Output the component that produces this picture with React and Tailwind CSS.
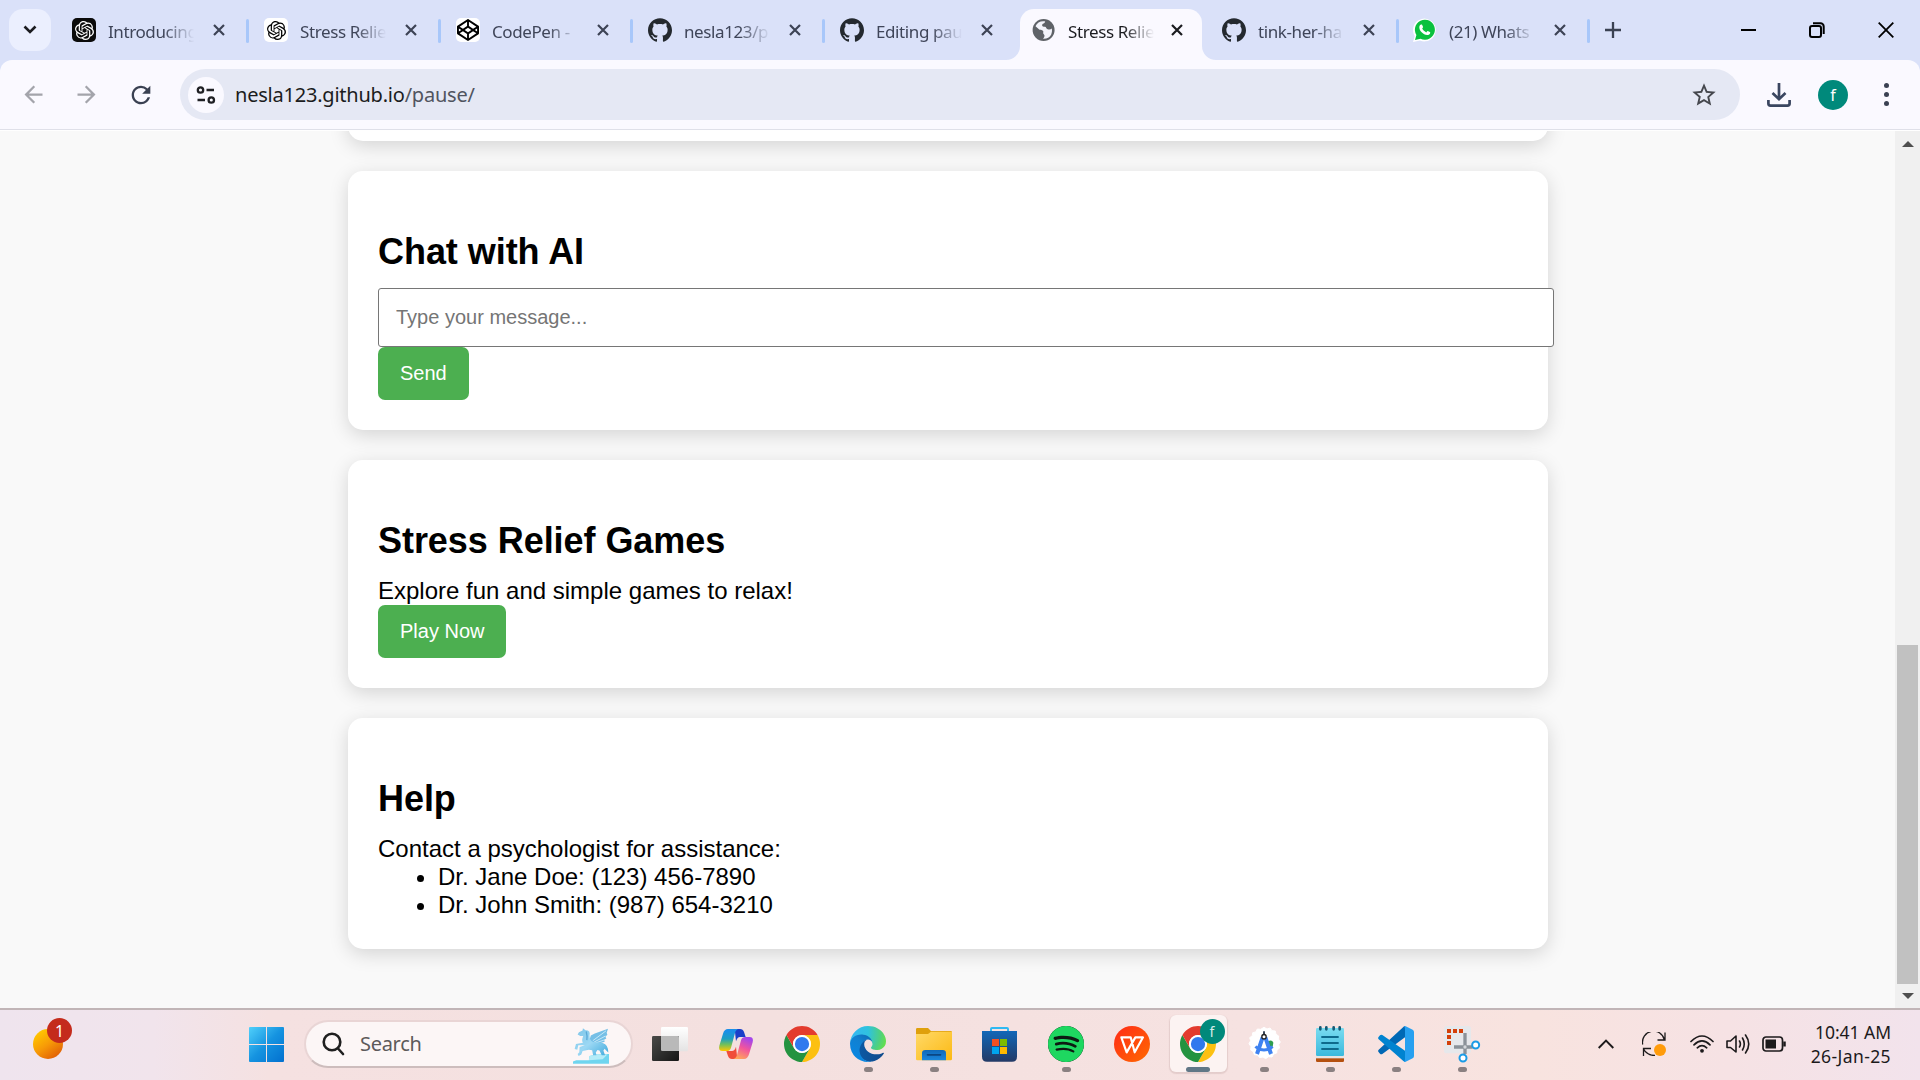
import React from "react";
import { SiOpenai, SiGithub, SiSpotify } from "react-icons/si";
import { FaCodepen } from "react-icons/fa";
import { MdArrowBack, MdArrowForward, MdRefresh, MdStarBorder } from "react-icons/md";

const Cross = ({ className = "" }) => (
  <svg viewBox="0 0 12 12" className={`h-3 w-3 shrink-0 ${className}`} stroke="currentColor" strokeWidth="2.2" fill="none">
    <path d="M1 1L11 11M11 1L1 11" />
  </svg>
);

const Globe = () => (
  <svg viewBox="0 0 24 24" className="h-6 w-6">
    <circle cx="11.6" cy="12" r="11" fill="#5f6368" />
    <path d="M13.2 3.4c-4-1-8.200 1-9.700 4.900l3.700 3.100c1.300.9 3.400.2 4 1.600.4 1.300-.6 2.200.6 3.200 1.500 1.100.4 3.300-.8 4.500 3.500.3 6.600-1 8.100-3.900.900-2 1.200-4.700.6-6.200-.9 1-2.400 1.200-4 .7-1.900-.7-1.200-2.500-3.200-2.500-2.300 0-3.100-1.600-1.600-3 .9-.8 2.200-1 2.300-2.400z" fill="#f3f4fb" />
  </svg>
);

const Tile = ({ dark, children }) => (
  <span className={`flex h-6 w-6 items-center justify-center rounded-[5px] ${dark ? "bg-[#0b0b0b] text-white" : "bg-white text-black"}`}>
    {children}
  </span>
);

const github = <SiGithub className="h-6 w-6 text-[#24292f]" />;

const TABS = [
  { title: "Introducing", icon: <Tile dark><SiOpenai size={19} /></Tile>, width: "w-[192px]", sep: true },
  { title: "Stress Relie", icon: <Tile><SiOpenai size={19} /></Tile>, width: "w-[192px]", sep: true },
  { title: "CodePen -", icon: <Tile><FaCodepen size={22} /></Tile>, width: "w-[192px]", sep: true },
  { title: "nesla123/p", icon: github, width: "w-[192px]", sep: true },
  { title: "Editing pau", icon: github, width: "w-[192px]" },
  { title: "Stress Relie", icon: <Globe />, width: "w-[190px]", active: true },
  { title: "tink-her-ha", icon: github, width: "w-[191px]", sep: true },
  {
    title: "(21) Whats",
    icon: (
      <svg viewBox="0 0 24 24" className="h-6 w-6">
        <path d="M0 24l1.700-6A11.400 11.400 0 1 1 7 22.500z" fill="#fff" />
        <path d="M2 22l1.400-5A10 10 0 1 1 7.500 20.700z" fill="#0ac13e" />
        <path d="M8.300 6.500c.5 0 .7 0 .9.5l.9 2.100c.1.400-.7 1.200-.9 1.500.9 1.800 2.300 3 4.100 3.800.4-.3 1-1.500 1.400-1.400l2.200 1c.4.200.4.500.3 1-.3 1.400-1.600 2-2.900 2-4.300-.5-8-4.200-8-7.800 0-1.400.9-2.700 2-2.700z" fill="#fff" />
      </svg>
    ),
    width: "w-[191px]",
    sep: true,
  },
];

const Tab = ({ title, icon, width, sep, active }) => (
  <div className={`relative flex h-[51px] shrink-0 ${width}`}>
    <div className={`flex h-full w-[182px] items-center pb-[9px] pl-3 ${active ? "rounded-t-[14px] bg-[#faf9ff]" : ""}`}>
      {icon}
      <span
        className={`ml-3 mt-[3px] w-[90px] shrink-0 whitespace-nowrap text-[17px] leading-6 tracking-[-0.4px] [mask-image:linear-gradient(to_right,black_62%,transparent_96%)] ${active ? "text-[#1b1c20]" : "text-[#3f4559]"}`}
      >
        {title}
      </span>
      <Cross className={active ? "ml-[13px] text-[#1b1c20]" : "ml-[15px] text-[#3d4355]"} />
    </div>
    {sep && <div className="ml-1 mt-[10px] h-6 w-[3px] rounded-full bg-[#a8c7fa]" />}
    {active && (
      <>
        <svg viewBox="0 0 14 14" className="absolute -left-[14px] bottom-0 h-[14px] w-[14px]">
          <path d="M14 0V14H0A14 14 0 0 0 14 0z" fill="#faf9ff" />
        </svg>
        <svg viewBox="0 0 14 14" className="absolute bottom-0 left-[182px] h-[14px] w-[14px]">
          <path d="M0 0V14H14A14 14 0 0 1 0 0z" fill="#faf9ff" />
        </svg>
      </>
    )}
  </div>
);

const TabStrip = () => (
  <div className="flex h-[60px] shrink-0 items-start bg-[#dae1f9] pt-[9px]">
    <div className="ml-[9px] mr-[9px] flex h-[42px] w-[42px] shrink-0 items-center justify-center rounded-[14px] bg-[#ebeffe]">
      <svg viewBox="0 0 14 10" className="h-[10px] w-[14px]" fill="none" stroke="#1b1c20" strokeWidth="2.6">
        <path d="M1.500 1.500L7 7L12.500 1.500" />
      </svg>
    </div>
    {TABS.map((t, i) => (
      <Tab key={i} {...t} />
    ))}
    <svg viewBox="0 0 16 16" className="ml-[13px] mt-[13px] h-4 w-4 shrink-0" stroke="#3a4152" strokeWidth="2.300">
      <path d="M8 0V16M0 8H16" />
    </svg>
    <div className="ml-auto mr-[26px] mt-[12px] flex h-[18px] items-center gap-[53px] text-black">
      <div className="h-[2px] w-[15px] bg-black" />
      <svg viewBox="0 0 16 16" className="h-4 w-4" fill="none" stroke="#000" strokeWidth="2">
        <rect x="1" y="4" width="11" height="11" rx="2" />
        <path d="M4 1.300H11.500A3.200 3.200 0 0 1 14.700 4.500V12" />
      </svg>
      <svg viewBox="0 0 16 16" className="h-4 w-4" fill="none" stroke="#000" strokeWidth="1.800">
        <path d="M.7.700L15.300 15.300M15.300.700L.7 15.300" />
      </svg>
    </div>
  </div>
);

const Toolbar = () => (
  <div className="h-[71px] shrink-0 bg-[#dae1f9]">
    <div className="flex h-[70px] items-center rounded-t-[12px] border-b border-[#dfe0e9] bg-[#faf9ff] pl-[20px]">
      <MdArrowBack size={27} className="mr-[26px] text-[#a3a4ab]" />
      <MdArrowForward size={27} className="mr-[27px] text-[#a3a4ab]" />
      <MdRefresh size={28} className="mr-[25px] text-[#3a4152]" />
      <div className="flex h-[51px] w-[1560px] items-center rounded-full bg-[#e5e8f4] pl-[8px] pr-[22px]">
        <div className="flex h-9 w-9 items-center justify-center rounded-full bg-[#faf9ff]">
          <svg viewBox="0 0 20 18" className="h-[18px] w-5" fill="none" stroke="#1f2024" strokeWidth="2.300">
            <circle cx="4.500" cy="4" r="2.700" />
            <path d="M10.500 4H18M1.500 14H9" />
            <circle cx="15.300" cy="14" r="2.700" />
          </svg>
        </div>
        <span className="ml-[11px] text-[20px] leading-7 tracking-[-0.22px] text-[#1b1c20]">
          nesla123.github.io<span className="text-[#50545f]">/pause/</span>
        </span>
        <MdStarBorder size={28} className="ml-auto text-[#45474d]" />
      </div>
      <svg viewBox="0 0 24 24" className="ml-[27px] h-6 w-6" fill="none" stroke="#3a4660" strokeWidth="2.700">
        <path d="M12 0V15.500M5.500 10L12 16.200L18.500 10M1.400 17V20.500Q1.400 22.600 3.500 22.600H20.500Q22.600 22.600 22.600 20.500V17" />
      </svg>
      <div className="ml-[27px] flex h-[30px] w-[30px] items-center justify-center rounded-full bg-[#00897b] text-[16px] text-white">f</div>
      <div className="ml-[36px] flex flex-col gap-[4px]">
        <i className="h-[5px] w-[5px] rounded-full bg-[#3a4152]" />
        <i className="h-[5px] w-[5px] rounded-full bg-[#3a4152]" />
        <i className="h-[5px] w-[5px] rounded-full bg-[#3a4152]" />
      </div>
    </div>
    <div className="h-px bg-white" />
  </div>
);

const Card = ({ title, height, children }) => (
  <section className={`w-[1200px] shrink-0 rounded-[15px] bg-white px-[30px] pt-[60px] shadow-[0_5px_19px_rgba(0,0,0,0.15)] ${height}`}>
    <h2 className="mb-[15px] text-[36px] font-bold leading-[42px] tracking-[-0.05px]">{title}</h2>
    {children}
  </section>
);

const GreenButton = ({ children }) => (
  <button className="block h-[53px] rounded-[7px] bg-[#4caf50] px-[22px] text-[20px] leading-[23px] text-white">{children}</button>
);

const Page = () => (
  <div className="flex min-h-0 flex-1 bg-[#f9f9f9] font-['Liberation_Sans',Arial,sans-serif] text-[24px] leading-[28px] text-black">
    <main className="flex flex-1 flex-col gap-[30px] overflow-hidden pl-[348px]">
      <div className="h-[10px] w-[1200px] shrink-0">
        <div className="-mt-[40px] h-[50px] rounded-[15px] bg-white shadow-[0_5px_19px_rgba(0,0,0,0.15)]" />
      </div>
      <Card title="Chat with AI" height="h-[259px]">
        <input
          placeholder="Type your message..."
          className="block h-[59px] w-[1176px] rounded-[3px] border border-[#767676] bg-white px-[17px] text-[20px] placeholder:text-[#757575]"
        />
        <GreenButton>Send</GreenButton>
      </Card>
      <Card title="Stress Relief Games" height="h-[228px]">
        <p>Explore fun and simple games to relax!</p>
        <GreenButton>Play Now</GreenButton>
      </Card>
      <Card title="Help" height="h-[231px]">
        <p>Contact a psychologist for assistance:</p>
        <ul className="list-disc pl-[60px]">
          <li>Dr. Jane Doe: (123) 456-7890</li>
          <li>Dr. John Smith: (987) 654-3210</li>
        </ul>
      </Card>
    </main>
    <div className="flex w-[25px] flex-col items-center bg-[#f0f0f0] py-[10px] pb-[9px]">
      <svg viewBox="0 0 12 6" className="h-[6px] w-[12px] shrink-0" fill="#4f4f4f"><path d="M0 6L6 0L12 6z" /></svg>
      <div className="mt-auto mb-[9px] h-[339px] w-[21px] bg-[#c1c1c1]" />
      <svg viewBox="0 0 12 6" className="h-[6px] w-[12px] shrink-0" fill="#4f4f4f"><path d="M0 0L6 6L12 0z" /></svg>
    </div>
  </div>
);

const Icon = ({ children, box = "0 0 108 108" }) => (
  <svg viewBox={box} className="h-9 w-9 overflow-visible">{children}</svg>
);

const TaskView = () => (
  <Icon>
    <defs>
      <linearGradient id="tvDark" x1="0" y1="0" x2="1" y2="1"><stop stopColor="#4a4a48" /><stop offset="1" stopColor="#151515" /></linearGradient>
      <linearGradient id="tvLight" x1="0" y1="0" x2="0" y2="1"><stop stopColor="#fff" /><stop offset="1" stopColor="#e4e3e3" /></linearGradient>
    </defs>
    <rect x="27" y="3" width="81" height="73" rx="4" fill="url(#tvLight)" />
    <rect x="0" y="30" width="81" height="75" rx="4" fill="url(#tvDark)" />
    <path d="M27 30H77Q81 30 81 34V75H31Q27 75 27 71z" fill="#b9b9b9" />
  </Icon>
);

const Copilot = () => (
  <Icon>
    <defs>
      <linearGradient id="cpA" x1="0" y1="0" x2="0" y2="1"><stop offset=".1" stopColor="#1a8fe8" /><stop offset=".45" stopColor="#1e9fc0" /><stop offset=".7" stopColor="#6fbf5c" /><stop offset="1" stopColor="#ffc800" /></linearGradient>
      <linearGradient id="cpB" x1=".7" y1="0" x2=".3" y2="1"><stop offset=".05" stopColor="#a546ea" /><stop offset=".5" stopColor="#f2559c" /><stop offset="1" stopColor="#ffa65a" /></linearGradient>
    </defs>
    <path d="M50 9H66Q75 9 78 18L83 33H66Q58 33 54 46z" fill="#1a3fc9" />
    <path d="M58 99H42Q33 99 30 90L25 75H42Q50 75 54 62z" fill="#f04e3a" />
    <path d="M30 9H62Q54 10 51 21L39 65Q36 75 26 75H14Q0 75 4 59L15 23Q19 9 30 9z" fill="url(#cpA)" />
    <path d="M78 99H46Q54 98 57 87L69 43Q72 33 82 33H94Q108 33 104 49L93 85Q89 99 78 99z" fill="url(#cpB)" />
  </Icon>
);

const Chrome = () => (
  <Icon box="0 0 48 48">
    <path d="M24 12H44.780A24 24 0 0 1 24 48L34.390 30A12 12 0 0 0 24 12" fill="#fcc011" />
    <path d="M13.610 30L3.220 12A24 24 0 0 0 24 48L34.390 30A12 12 0 0 1 13.610 30" fill="#249340" />
    <path d="M3.220 12A24 24 0 0 1 44.780 12H24A12 12 0 0 0 13.610 30z" fill="#e33b2e" />
    <circle cx="24" cy="24" r="12" fill="#fff" />
    <circle cx="24" cy="24" r="9.500" fill="#3079ee" />
  </Icon>
);

const Edge = () => (
  <Icon box="0 0 256 256">
    <defs>
      <linearGradient id="edA" x1="63" y1="177" x2="241" y2="177" gradientUnits="userSpaceOnUse"><stop stopColor="#0c59a4" /><stop offset="1" stopColor="#114a8b" /></linearGradient>
      <linearGradient id="edB" x1="157" y1="80" x2="46" y2="220" gradientUnits="userSpaceOnUse"><stop stopColor="#0f6cb5" /><stop offset=".4" stopColor="#1180d0" /><stop offset="1" stopColor="#0a86e0" /></linearGradient>
      <radialGradient id="edC" cx="20" cy="50" r="245" gradientUnits="userSpaceOnUse"><stop stopColor="#35b8f1" /><stop offset=".45" stopColor="#2fc2df" /><stop offset=".8" stopColor="#4ed07f" /><stop offset="1" stopColor="#66e048" /></radialGradient>
    </defs>
    <path fill="url(#edA)" d="M235.680 190.540a93.730 93.730 0 0 1-10.540 4.710 101.870 101.870 0 0 1-35.900 6.460c-47.320 0-88.540-32.550-88.540-74.320A31.480 31.480 0 0 1 117.130 100c-42.800 1.800-53.800 46.400-53.800 72.530 0 73.880 68.090 81.370 82.760 81.370 7.910 0 19.840-2.300 27-4.560l1.310-.44a128.340 128.340 0 0 0 66.600-52.800 4 4 0 0 0-5.320-5.560z" />
    <path fill="url(#edB)" d="M105.730 241.420a79.200 79.200 0 0 1-22.740-21.340 80.720 80.720 0 0 1 29.530-120c3.120-1.470 8.450-4.130 15.540-4a32.350 32.350 0 0 1 25.690 13 31.880 31.880 0 0 1 6.360 18.660c0-.21 24.460-79.600-80-79.600-43.900 0-80 41.660-80 78.210a130.150 130.150 0 0 0 12.110 56 128 128 0 0 0 156.380 67.110 75.550 75.550 0 0 1-62.780-8z" />
    <path fill="url(#edC)" d="M152.330 148.860c-.81 1.050-3.300 2.500-3.300 5.660 0 2.610 1.700 5.120 4.720 7.230 14.380 10 41.490 8.680 41.560 8.680a59.560 59.560 0 0 0 30.270-8.350A61.380 61.380 0 0 0 256 109.200c.26-22.410-8-37.310-11.340-43.910C223.460 23.840 177.720 0 128 0A128 128 0 0 0 0 126.200c.48-36.540 36.800-66.050 80-66.050 3.500 0 23.460.34 42 10.070 16.340 8.580 24.900 18.940 30.850 29.210 6.180 10.670 7.280 24.150 7.280 29.520s-2.740 13.330-7.800 19.910z" />
  </Icon>
);

const Explorer = () => (
  <Icon>
    <defs>
      <linearGradient id="fx" x1="0" y1="0" x2="1" y2="1"><stop stopColor="#ffd968" /><stop offset="1" stopColor="#fcb913" /></linearGradient>
      <linearGradient id="fxb" x1="0" y1="0" x2="0" y2="1"><stop stopColor="#1068b8" /><stop offset="1" stopColor="#1b87dd" /></linearGradient>
    </defs>
    <path d="M0 10Q0 6 4 6H36L45 15H104Q108 15 108 19V40H0z" fill="#dfa00c" />
    <path d="M0 24H36L45 17H108V99Q108 103 104 103H4Q0 103 0 99z" fill="url(#fx)" />
    <path d="M18 103V82Q18 72 28 72H80Q90 72 90 82V103z" fill="url(#fxb)" />
    <rect x="32" y="84" width="44" height="5" rx="2.500" fill="#0b4683" />
  </Icon>
);

const Store = () => (
  <Icon>
    <defs><linearGradient id="st" x1="0" y1="0" x2="0" y2="1"><stop stopColor="#1167b8" /><stop offset="1" stopColor="#233a66" /></linearGradient></defs>
    <path d="M27 22V9Q27 6 30 6H75Q78 6 78 9V22" fill="none" stroke="#2fb9f2" strokeWidth="6" />
    <path d="M0 15H105V92Q105 107 90 107H15Q0 107 0 92z" fill="url(#st)" />
    <rect x="30" y="39" width="21" height="21" fill="#f25022" />
    <rect x="54" y="39" width="21" height="21" fill="#7fba00" />
    <rect x="30" y="63" width="21" height="21" fill="#00a4ef" />
    <rect x="54" y="63" width="21" height="21" fill="#ffb900" />
  </Icon>
);

const Spotify = () => (
  <span className="flex h-9 w-9 rounded-full bg-[#0d1a12]">
    <SiSpotify className="h-9 w-9 text-[#1ed760]" />
  </span>
);

const Wps = () => (
  <Icon>
    <defs><linearGradient id="wp" x1="0" y1="0" x2="1" y2="1"><stop stopColor="#ff2a17" /><stop offset="1" stopColor="#ff6a00" /></linearGradient></defs>
    <circle cx="54" cy="54" r="54" fill="url(#wp)" />
    <path d="M22 34H50L62 79L87 34H64L38 79Z" fill="none" stroke="#fff" strokeWidth="6.500" strokeLinejoin="round" />
  </Icon>
);

const Studio = () => (
  <Icon>
    <path d="M54 4l9 5 9-3 6 8 10 1 2 10 8 5-1 9 6 9-5 8 3 10-8 6-1 9-9 3-5 9-10-1-9 6-8-5-10 2-6-8-10-1-3-9-8-5 1-10-6-9 5-9-3-9 8-6 1-9 9-2 5-9 10 1z" fill="#fff" stroke="#fff" strokeWidth="3" strokeLinejoin="round" />
    <path d="M66 46q12-6 16 4l-2 12H66z" fill="#2f9e4f" />
    <path d="M50 34L33 84M58 34L75 84" stroke="#3e82f1" strokeWidth="12" />
    <path d="M28 62Q54 82 80 62" fill="none" stroke="#3e82f1" strokeWidth="9" />
    <path d="M54 16V28" stroke="#3a4658" strokeWidth="6" />
    <circle cx="54" cy="32" r="6.500" fill="#fff" stroke="#222" strokeWidth="4" />
  </Icon>
);

const Notepad = () => (
  <Icon>
    <defs><linearGradient id="np" x1="0" y1="0" x2="0" y2="1"><stop stopColor="#7adcf0" /><stop offset="1" stopColor="#3bb9dd" /></linearGradient></defs>
    <path d="M12 94H96V104Q96 108 92 108H16Q12 108 12 104z" fill="#b5500f" />
    <path d="M12 84H96V97H12z" fill="#e9e4e2" />
    <path d="M12 10Q12 6 16 6H92Q96 6 96 10V86Q96 90 92 90H16Q12 90 12 86z" fill="url(#np)" />
    <path d="M30 33H78M30 51H78M30 69H78" stroke="#0e6a8c" strokeWidth="5.500" strokeLinecap="round" />
    <path d="M25 4V10M43 4V10M65 4V10M83 4V10" stroke="#145a75" strokeWidth="8" strokeLinecap="round" />
  </Icon>
);

const VsCode = () => (
  <Icon>
    <path d="M81 2V34L13 84Q9 86 6 83L1 77Q-1 74 2 71L76 3Q78 0 81 0z" fill="#0068b5" />
    <path d="M81 106V74L13 27Q9 25 6 28L1 34Q-1 37 2 40L76 105Q78 107 81 108z" fill="#0083d0" />
    <path d="M78 107Q81 104 81 99V9Q81 4 78 1Q80-1 83 1L104 11Q108 13 108 18V90Q108 95 104 97L83 107Q80 109 78 107z" fill="#27a0f0" />
  </Icon>
);

const Snip = () => (
  <Icon>
    <rect x="0" y="0" width="81" height="82" rx="8" fill="#e6e8eb" />
    <path d="M9 15H57" stroke="#d4400a" strokeWidth="12" strokeDasharray="12 6" />
    <path d="M15 27V57" stroke="#d4400a" strokeWidth="12" strokeDasharray="12 6" />
    <path d="M63 21V84M30 63H86" stroke="#8b9299" strokeWidth="10" />
    <circle cx="63" cy="63" r="5" fill="#d5d8db" />
    <circle cx="95" cy="57" r="10.500" fill="#fff" stroke="#1a9be6" strokeWidth="6" />
    <circle cx="57" cy="96" r="10.500" fill="#fff" stroke="#1a9be6" strokeWidth="6" />
  </Icon>
);

const APPS = [
  { icon: <TaskView /> },
  { icon: <Copilot /> },
  { icon: <Chrome /> },
  { icon: <Edge />, open: true },
  { icon: <Explorer />, open: true },
  { icon: <Store /> },
  { icon: <Spotify />, open: true },
  { icon: <Wps /> },
  { icon: <Chrome />, active: true },
  { icon: <Studio />, open: true },
  { icon: <Notepad />, open: true },
  { icon: <VsCode />, open: true },
  { icon: <Snip />, open: true },
];

const Pegasus = () => (
  <svg viewBox="0 0 109 108" className="h-9 w-9">
    <defs><linearGradient id="pg" x1="0" y1="0" x2="1" y2="1"><stop stopColor="#7cc4e8" /><stop offset=".5" stopColor="#9cd8f4" /><stop offset="1" stopColor="#3fa9dc" /></linearGradient></defs>
    <path d="M0 101L10 97H48L50 84L70 80L109 78V108H0z" fill="#6fd5ef" />
    <path d="M50 84L70 80L104 80L90 94L48 97z" fill="#b4ecf8" />
    <path d="M48 42L54 22L66 16L106 2L102 14L104 20L98 26L101 31L94 35L96 41L84 45L72 48z" fill="#76bfe6" />
    <path d="M60 38L100 8M64 42L98 24M68 45L94 36" stroke="#c5e8f8" strokeWidth="3" />
    <path d="M30 0L38 6Q54 6 50 22Q50 36 60 42Q78 43 90 45Q107 50 107 74L99 66L96 62L92 68L97 82H87L80 68L74 66L69 74L71 82H61L58 67L48 65L29 69L25 80L17 84L14 78L19 73L20 57L36 52L16 52L13 65L5 63L9 48L30 44Q25 38 31 24L22 24L14 19L18 12L29 7z" fill="url(#pg)" />
    <path d="M40 10Q44 24 42 36" fill="none" stroke="#5ba9d8" strokeWidth="4" />
  </svg>
);

const Taskbar = () => (
  <footer className="flex h-[72px] shrink-0 items-center border-t-2 border-[#c1b5b7] bg-[linear-gradient(90deg,#efe4ee_0%,#f1e4ec_8%,#f5e1e1_14%,#f4e0df_40%,#f6e2e1_65%,#f8e3df_80%,#f6e2e4_90%,#f2e3ec_100%)]">
    <div className="relative -mt-[2px] ml-[33px] h-[30px] w-[30px] rounded-full bg-[linear-gradient(145deg,#ffc400_15%,#f79a07_50%,#e05c06_90%)]">
      <span className="absolute -top-[11px] left-[14px] flex h-[25px] w-[25px] items-center justify-center rounded-full bg-[#c42b1c] text-[16px] text-white">1</span>
    </div>
    <svg viewBox="0 0 35 35" className="-mt-px ml-[186px] h-[35px] w-[35px]">
      <defs><linearGradient id="win" x1="0" y1="0" x2="1" y2="1"><stop stopColor="#50d0fb" /><stop offset=".5" stopColor="#1593e0" /><stop offset="1" stopColor="#0270cf" /></linearGradient></defs>
      <path d="M1 0H17V17H0V1Q0 0 1 0zM18 0H34Q35 0 35 1V17H18zM0 18H17V35H1Q0 35 0 34zM18 18H35V34Q35 35 34 35H18z" fill="url(#win)" />
    </svg>
    <div className="-mt-[2px] ml-[20px] flex h-[48px] w-[329px] items-center rounded-full border-2 border-b-[#cdbdbd] border-[#e9d5d5] bg-[#fcf6f6] pl-[15px] pr-[22px]">
      <svg viewBox="0 0 24 24" className="h-6 w-6" fill="none" stroke="#1f1f1f" strokeWidth="2.600" strokeLinecap="round">
        <circle cx="11" cy="10" r="8.300" /><path d="M17 16.500L22 22" />
      </svg>
      <span className="ml-[15px] text-[20px] leading-7 tracking-[-0.3px] text-[#5d5a5a]">Search</span>
      <div className="ml-auto mt-[3px]"><Pegasus /></div>
    </div>
    <div className="ml-[4px] flex">
      {APPS.map((a, i) => (
        <div key={i} className="flex h-[60px] w-[66px] justify-center">
          <div className={`relative flex h-[57px] w-[57px] justify-center rounded-[6px] pt-[11px] ${a.active ? "bg-[#fcf3f2] shadow-[0_1px_1px_1px_rgba(150,110,110,0.18)]" : ""}`}>
            {a.icon}
            {a.active && (
              <span className="absolute right-[2px] top-[4px] flex h-[25px] w-[25px] items-center justify-center rounded-full bg-[#00897b] text-[14px] text-[#d5ece9]">f</span>
            )}
            {a.active && <i className="absolute bottom-0 h-[5px] w-6 rounded-full bg-[#617786]" />}
            {a.open && <i className="absolute bottom-0 h-[5px] w-[9px] rounded-full bg-[#8a8081]" />}
          </div>
        </div>
      ))}
    </div>
    <div className="-mt-[2px] ml-auto mr-[29px] flex items-center text-[#1c1a1b]">
      <svg viewBox="0 0 16 10" className="mr-[28px] h-[10px] w-4" fill="none" stroke="currentColor" strokeWidth="1.900"><path d="M.7 9L8 1.500L15.300 9" /></svg>
      <svg viewBox="0 0 24 24" className="mr-[24px] h-6 w-6" fill="none" stroke="currentColor" strokeWidth="1.300">
        <path d="M.7 12.500A11 11 0 0 1 22.500 8M23 .5V8H15.500M1.500 24V16.500H9M1.500 17Q5 23.500 13 23.500" />
        <circle cx="18" cy="18" r="6" fill="#ff9b0b" stroke="none" />
      </svg>
      <svg viewBox="0 0 24 18" className="mr-[12px] h-[18px] w-6" fill="none" stroke="currentColor" strokeWidth="1.700" strokeLinecap="round">
        <path d="M1 6.500Q12-4.500 23 6.500M4 9.800Q12 2 20 9.800M7.300 12.800Q12 8.500 16.700 12.800" /><circle cx="12" cy="15.800" r="1.900" fill="currentColor" stroke="none" />
      </svg>
      <svg viewBox="0 0 24 20" className="mr-[12px] h-5 w-6" fill="none" stroke="currentColor" strokeWidth="1.600" strokeLinecap="round" strokeLinejoin="round">
        <path d="M1 7H4.500L10 2V18L4.500 13.500H1zM13.500 7Q15.300 10 13.500 13M16.500 4Q20 10 16.500 16M19.500 1Q26 10 19.500 19" />
      </svg>
      <svg viewBox="0 0 24 16" className="mr-[25px] h-4 w-6" fill="none" stroke="currentColor" strokeWidth="1.700">
        <rect x="1" y="1" width="19.500" height="14" rx="3" /><rect x="3.500" y="3.500" width="10.500" height="9" fill="currentColor" stroke="none" /><path d="M22.500 5.500V10.500" strokeWidth="2.500" />
      </svg>
      <div className="flex w-[80px] flex-col items-end whitespace-nowrap text-[17.500px] leading-[24px]">
        <div className="tracking-[-0.05px]">10:41 AM</div>
        <div className="tracking-[0.4px]">26-Jan-25</div>
      </div>
    </div>
  </footer>
);

export default function App() {
  return (
    <div className="flex h-[1080px] w-[1920px] flex-col overflow-hidden bg-[#f9f9f9] font-['Noto_Sans',sans-serif]">
      <TabStrip />
      <Toolbar />
      <Page />
      <Taskbar />
    </div>
  );
}
